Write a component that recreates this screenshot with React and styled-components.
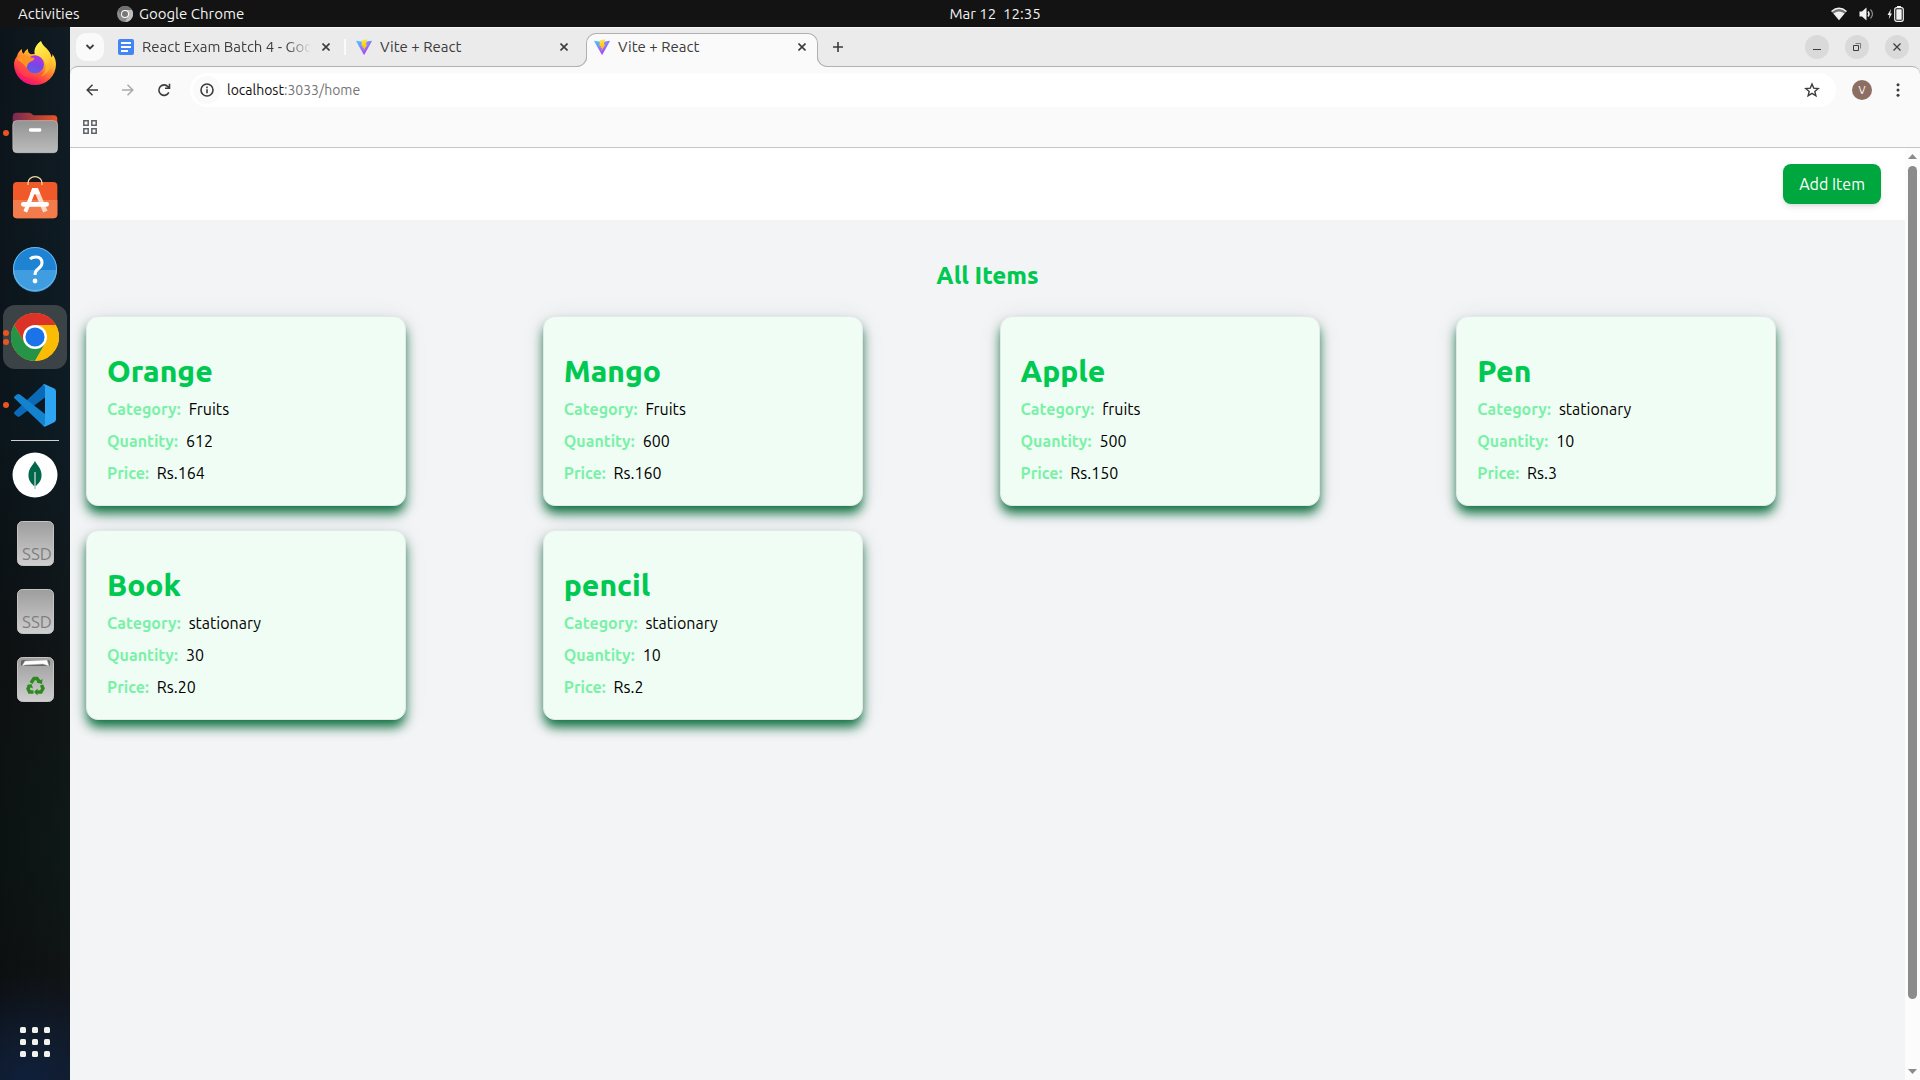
import React from "react";
import styled, { createGlobalStyle, css } from "styled-components";

const Global = createGlobalStyle`
  *, *::before, *::after { box-sizing: border-box; }
  body { margin: 0; font-family: "Ubuntu", "Noto Sans", "Open Sans", sans-serif; }
  h1, h2, dl, dd, dt { margin: 0; }
  button, input { font: inherit; color: inherit; }
  button { border: 0; padding: 0; background: none; cursor: pointer; }
  svg { display: block; }
`;

/* ---------- desktop shell ---------- */

const Desktop = styled.div`
  display: flex;
  flex-direction: column;
  height: 100vh;
  overflow: hidden;
  background: #131313;
`;

const TopBar = styled.header`
  display: grid;
  grid-template-columns: 70px 1fr auto 1fr;
  align-items: center;
  flex: none;
  height: 27px;
  background: #131313;
  color: #f2f2f2;
  font-size: 15px;
  line-height: 20px;
  white-space: pre;
`;

const Activities = styled.button`
  padding-left: 18px;
  text-align: left;
`;

const AppMenu = styled.button`
  display: flex;
  align-items: center;
  justify-self: start;
  gap: 6px;
  padding-left: 47px;
`;

const StatusArea = styled.div`
  display: flex;
  align-items: center;
  justify-content: flex-end;
  gap: 12px;
  padding-right: 16px;
`;

const Workspace = styled.div`
  display: flex;
  flex: 1;
  min-height: 0;
`;

/* ---------- dock ---------- */

const Dock = styled.nav`
  display: flex;
  flex-direction: column;
  align-items: center;
  gap: 4px;
  flex: none;
  width: 70px;
  padding: 6px 3px;
  background:
    radial-gradient(circle at 40% 100%, #10203a 0, transparent 110px),
    linear-gradient(90deg, rgba(0, 0, 0, 0.25), transparent),
    linear-gradient(#101b23 0, #0e1c24 38%, #111516 62%, #0e1917 78%, #111315 92%, #111722 100%);
`;

const DockButton = styled.button`
  position: relative;
  display: flex;
  align-items: center;
  justify-content: center;
  flex: none;
  width: 64px;
  height: 64px;
  border-radius: 12px;
  ${(p) => p.$active && css`background: #3b4347;`}
`;

const RunningDots = styled.span`
  position: absolute;
  left: 0;
  top: 0;
  bottom: 0;
  display: flex;
  flex-direction: column;
  justify-content: center;
  gap: 3px;
`;

const Dot = styled.span`
  width: 6px;
  height: 6px;
  border-radius: 50%;
  background: #e95420;
`;

const DockRule = styled.hr`
  flex: none;
  width: 48px;
  height: 1px;
  margin: -1px 0 -2px;
  border: 0;
  background: #d0d0d0;
`;

const DockSpacer = styled.div`
  flex: 1;
`;

/* ---------- browser chrome ---------- */

const Browser = styled.div`
  display: flex;
  flex-direction: column;
  flex: 1;
  min-width: 0;
  background: #ebebeb;
  border-top: 1px solid #f8f8f8;
`;

const TabStrip = styled.div`
  display: flex;
  align-items: center;
  flex: none;
  height: 38px;
  padding: 0 11px 0 6px;
  color: #3c3c3c;
`;

const TabSearch = styled.button`
  display: grid;
  place-items: center;
  width: 28px;
  height: 28px;
  margin-right: 6px;
  border-radius: 10px;
  background: #fafafa;
`;

const Tab = styled.div`
  position: relative;
  display: flex;
  align-items: center;
  gap: 8px;
  width: 232px;
  height: 28px;
  padding: 0 8px;
  font-size: 15px;
  line-height: 20px;
  ${(p) =>
    p.$active &&
    css`
      z-index: 1;
      align-self: flex-end;
      height: 34px;
      margin-bottom: -1px;
      padding: 0 7px 7px;
      border: 1px solid #b0b0b0;
      border-bottom: 0;
      border-radius: 10px 10px 0 0;
      background: #fafafa;

      &::before,
      &::after {
        content: "";
        position: absolute;
        bottom: 0;
        width: 10px;
        height: 10px;
        border: 0 solid #b0b0b0;
        border-bottom-width: 1px;
        clip-path: inset(0 -1px 0 -1px);
      }
      &::before {
        left: -10px;
        border-right-width: 1px;
        border-bottom-right-radius: 10px;
        box-shadow: 3px 3px 0 2px #fafafa;
      }
      &::after {
        right: -10px;
        border-left-width: 1px;
        border-bottom-left-radius: 10px;
        box-shadow: -3px 3px 0 2px #fafafa;
      }
    `}
`;

const TabTitle = styled.span`
  flex: 1;
  overflow: hidden;
  white-space: nowrap;
  ${(p) =>
    p.$faded &&
    css`
      margin-right: -8px;
      mask-image: linear-gradient(90deg, #000 82%, transparent 96%);
    `}
`;

const TabGap = styled.span`
  display: flex;
  justify-content: center;
  width: 6px;
  height: 16px;
  &::before {
    content: "";
    width: 2px;
    background: ${(p) => (p.$visible ? "#fafafa" : "transparent")};
  }
`;

const SmallButton = styled.button`
  display: grid;
  place-items: center;
  flex: none;
  width: ${(p) => p.$size || 16}px;
  height: ${(p) => p.$size || 16}px;
  border-radius: 50%;
`;

const NewTab = styled(SmallButton)`
  margin-left: 6px;
`;

const WindowControls = styled.div`
  display: flex;
  gap: 16px;
  margin-left: auto;
`;

const WindowButton = styled(SmallButton)`
  background: #dadada;
`;

const Toolbar = styled.div`
  flex: none;
  border: 0 solid #b0b0b0;
  border-top-width: 1px;
  border-radius: 8px 8px 0 0;
  background: #fafafa;
  color: #3c3c3c;
`;

const AddressRow = styled.div`
  display: flex;
  align-items: center;
  gap: 8px;
  padding: 6px 8px 0;
`;

const OmniBox = styled.form`
  display: flex;
  align-items: center;
  flex: 1;
  height: 34px;
  margin: 0 4px;
  padding: 0 10px 0 3px;
  border-radius: 17px;
  background: #fff;
`;

const SiteInfo = styled(SmallButton)`
  background: #fafafa;
  margin-right: 6px;
`;

const Address = styled.a`
  flex: 1;
  color: #757575;
  font-size: 14px;
  line-height: 20px;
  text-decoration: none;
`;

const Host = styled.span`
  color: #111;
`;

const Avatar = styled.button`
  width: 20px;
  height: 20px;
  margin: 0 4px;
  border-radius: 50%;
  background: #8d6e63;
  color: #fff;
  font-size: 11px;
  line-height: 20px;
`;

const BookmarkRow = styled.div`
  display: flex;
  align-items: center;
  height: 41px;
  padding: 0 6px;
  border-bottom: 1px solid #c6c6c6;
  color: #5f6368;
`;

/* ---------- inventory page ---------- */

const Viewport = styled.div`
  display: flex;
  flex: 1;
  min-height: 0;
`;

const Page = styled.div`
  flex: 1;
  min-width: 0;
  overflow: hidden;
  background: #f3f4f6;
  font-size: 16px;
  line-height: 24px;
  color: #000;
`;

const NavBar = styled.header`
  display: flex;
  justify-content: flex-end;
  padding: 16px 24px;
  background: #fff;
`;

const AddItem = styled.button`
  padding: 8px 16px;
  border-radius: 8px;
  background: #00a63e;
  color: #fff;
  box-shadow: 0 4px 6px -1px rgba(0, 0, 0, 0.1), 0 2px 4px -2px rgba(0, 0, 0, 0.1);
`;

const Content = styled.main`
  padding: 40px 16px;
`;

const Heading = styled.h1`
  margin-bottom: 24px;
  color: #00c951;
  font-size: 24px;
  font-weight: 800;
  line-height: 32px;
  text-align: center;
`;

const CardGrid = styled.div`
  display: grid;
  grid-template-columns: repeat(4, 1fr);
  gap: 24px;
`;

const Card = styled.article`
  max-width: 320px;
  padding: 36px 20px 20px;
  border: 1px solid #e5e7eb;
  border-radius: 12px;
  background: #f0fdf4;
  box-shadow: 0 8px 12px -1px #0d7040, 0 2px 24px rgba(0, 0, 0, 0.08);
`;

const CardTitle = styled.h2`
  margin-bottom: 8px;
  color: #00c951;
  font-size: 30px;
  font-weight: 800;
  line-height: 36px;
`;

const Facts = styled.dl`
  display: grid;
  gap: 8px;
`;

const Fact = styled.div`
  display: flex;
  gap: 8px;
`;

const FactName = styled.dt`
  color: #7bf1a8;
  font-weight: 700;
`;

const Rail = styled.div`
  display: flex;
  flex-direction: column;
  align-items: center;
  gap: 7px;
  width: 15px;
  padding: 6px 0;
  background: #fcfcfc;
`;

const Track = styled.div`
  flex: 1;
  width: 9px;
`;

const Thumb = styled.div`
  height: 93%;
  border-radius: 5px;
  background: #8b8b8b;
`;

/* ---------- drawings ---------- */

const Firefox = () => (
  <svg width="42" height="48" viewBox="42 48 126 144">
    <defs>
      <linearGradient id="ffBody" x1="0.8" y1="0.1" x2="0.3" y2="1">
        <stop offset="0" stopColor="#fff04a" />
        <stop offset="0.35" stopColor="#ffb52c" />
        <stop offset="0.65" stopColor="#ff5a38" />
        <stop offset="0.85" stopColor="#ff2358" />
        <stop offset="1" stopColor="#e3128a" />
      </linearGradient>
      <linearGradient id="ffGlobe" x1="0.6" y1="0" x2="0.3" y2="1">
        <stop offset="0" stopColor="#b833e1" />
        <stop offset="0.5" stopColor="#7a45e5" />
        <stop offset="1" stopColor="#5b5ff0" />
      </linearGradient>
      <linearGradient id="ffFlame" x1="0.3" y1="0" x2="0.7" y2="1">
        <stop offset="0" stopColor="#fff54f" />
        <stop offset="0.6" stopColor="#ffcf35" />
        <stop offset="1" stopColor="#ff9a2c" />
      </linearGradient>
    </defs>
    <path fill="url(#ffBody)" d="M51 94C53 84 59 76 66 72C65 79 67 84 71 86C74 79 78 74 84 71C82 79 87 85 93 88L107 86C102 72 111 57 123 49C127 64 143 70 150 85C152 90 153 94 154 97C157 95 158 91 157 87C165 96 168 108 168 118A63 62 0 0 1 42 118C42 108 46 100 51 94Z" />
    <path fill="url(#ffFlame)" d="M104 86C101 71 111 57 123 49C127 64 143 70 150 85C164 112 150 146 122 153C141 142 142 118 130 104C122 96 108 96 104 86Z" />
    <circle cx="105" cy="118" r="27" fill="url(#ffGlobe)" />
    <path fill="#ff9423" d="M53 105C59 89 79 87 90 97L103 99C105 106 92 109 86 114C80 120 82 124 80 128C72 119 66 112 53 105Z" />
    <path fill="#ff4a45" opacity="0.55" d="M52 108C70 112 70 124 80 135C94 153 122 149 132 136C128 160 76 168 58 140C52 130 50 118 52 108Z" />
  </svg>
);

const Files = () => (
  <svg width="46" height="42" viewBox="36 260 138 126">
    <defs>
      <linearGradient id="flBack"><stop offset="0" stopColor="#772953" /><stop offset="1" stopColor="#e95420" /></linearGradient>
      <linearGradient id="flFront" x2="0" y2="1"><stop offset="0" stopColor="#929292" /><stop offset="1" stopColor="#bcbcbc" /></linearGradient>
    </defs>
    <path fill="url(#flBack)" d="M38 274Q38 262 50 262H86Q92 262 96 266L100 270H162Q172 270 172 282V330H38Z" />
    <rect x="38.500" y="286" width="134" height="96" rx="12" fill="url(#flFront)" stroke="#c9c9c9" strokeWidth="2" />
    <rect x="87" y="309" width="37" height="10" rx="4" fill="#fff" />
  </svg>
);

const Software = () => (
  <svg width="46" height="52" viewBox="36 450 138 156">
    <rect x="39" y="471" width="133" height="109" rx="12" fill="#f0592a" />
    <path d="M39 525H172V568Q172 580 160 580H51Q39 580 39 568Z" fill="#f37b4c" />
    <path d="M84 480V474A21 19 0 0 1 126 474V480" fill="none" stroke="#f3d7a6" strokeWidth="4" />
    <path d="M103 491L76 560" stroke="#fff" strokeWidth="12" />
    <path d="M107 491L136 560" stroke="#fbd9cb" strokeWidth="14" />
    <path d="M97 489H113L121 508H90Z" fill="#fff" />
    <rect x="63" y="531" width="84" height="14" rx="7" fill="#fff" />
  </svg>
);

const Help = () => (
  <svg width="46" height="46" viewBox="0 0 46 46">
    <circle cx="23" cy="23" r="22" fill="#1f83d3" />
    <path d="M1 24H45A22 22 0 0 1 1 24Z" fill="#409ddf" />
    <circle cx="23" cy="23" r="21.500" fill="none" stroke="#6db8ea" />
    <path d="M18 13Q20 11 24 11Q30 11 30 17Q30 20 26 23Q23 25 23 29" fill="none" stroke="#fff" strokeWidth="3" />
    <circle cx="23" cy="35" r="2.400" fill="#fff" />
  </svg>
);

const Chrome = () => (
  <svg width="48" height="48" viewBox="0 0 48 48">
    <circle cx="24" cy="24" r="24" fill="#fbbc05" />
    <path fill="#dd3228" d="M3.200 12A24 24 0 0 1 44.800 12H24L13.600 30Z" />
    <path fill="#269447" d="M3.200 12A24 24 0 0 0 24 48L34.400 30L24 24L13.600 30Z" />
    <path fill="#fbbc05" d="M24 12H44.800A24 24 0 0 1 24 48L34.400 30Z" />
    <circle cx="24" cy="24" r="12" fill="#fff" />
    <circle cx="24" cy="24" r="9.600" fill="#1a73e8" />
  </svg>
);

const Code = () => (
  <svg width="42" height="43" viewBox="42 41 126 128">
    <path fill="#0a6ab8" d="M44 124Q40 127 44 131L52 138Q56 140 60 137L136 80V42Q132 40 128 44Z" />
    <path fill="#1483cf" d="M44 84Q40 80 44 77L52 71Q56 69 60 72L136 131V168Q132 168 128 164Z" />
    <path fill="#2ea5f2" d="M136 42L163 54Q168 57 168 62V147Q168 152 163 155L136 168Q131 168 128 164Q135 168 135 160V50Q135 42 128 45Q131 40 136 42Z" />
  </svg>
);

const Mongo = () => (
  <svg width="46" height="46" viewBox="0 0 46 46">
    <circle cx="23" cy="23" r="22.500" fill="#fff" />
    <path fill="#00684a" d="M23 9C25 13 29 16 29.500 22C30 28 27 31 24 34H22C19 31 16 28 16.500 22C17 16 21 13 23 9Z" />
    <path d="M23 20V37" stroke="#b8c4c2" strokeWidth="1.500" />
  </svg>
);

const DriveShell = ({ id }) => (
  <>
    <defs>
      <linearGradient id={id} x2="0" y2="1"><stop offset="0" stopColor="#9d9d9d" /><stop offset="1" stopColor="#cfcfcf" /></linearGradient>
    </defs>
    <rect x="0.500" y="0.500" width="36" height="44" rx="5" fill={`url(#${id})`} stroke="#c4c4c4" />
  </>
);

const Ssd = ({ id }) => (
  <svg width="37" height="45" viewBox="0 0 37 45">
    <DriveShell id={id} />
    <text x="5" y="39" fontSize="17" fill="#7f7f7f">SSD</text>
  </svg>
);

const Trash = () => (
  <svg width="37" height="45" viewBox="0 0 37 45">
    <DriveShell id="trashShell" />
    <path d="M4 9V5Q4 3 6 3H31Q33 3 33 5V9Z" fill="#666" />
    <path d="M5 9L8 4L30 3L32 9L26 7L8 8Z" fill="#fff" stroke="#bbb" strokeWidth="0.500" />
    <g fill="none" stroke="#2c8a1f" strokeWidth="3.400">
      <path d="M14 26L17 21.500H20L22.500 25" />
      <path d="M24.500 28L26 31.500L24 35H19.500" />
      <path d="M16.500 35H12.500L11 31.500L13 28" />
    </g>
    <g fill="#2c8a1f">
      <path d="M19.500 25.500L25 27L25.500 22Z" />
      <path d="M20.500 31.500V38.500L17 35Z" />
      <path d="M9.500 28.500L14.500 27L16 31.500Z" />
    </g>
  </svg>
);

const AppGrid = () => (
  <svg width="30" height="30" viewBox="0 0 30 30" fill="#f1f1ee">
    {[0, 12, 24].map((y) => [0, 12, 24].map((x) => <rect key={`${x}-${y}`} x={x} y={y} width="6" height="6" rx="1.500" />))}
  </svg>
);

const ViteLogo = () => (
  <svg width="16" height="16" viewBox="0 0 32 32">
    <defs>
      <linearGradient id="vtA" x1="0" y1="0" x2="0.6" y2="1"><stop offset="0" stopColor="#41d1ff" /><stop offset="1" stopColor="#bd34fe" /></linearGradient>
      <linearGradient id="vtB" x1="0.4" y1="0" x2="0.6" y2="1"><stop offset="0" stopColor="#ffea4a" /><stop offset="1" stopColor="#ffa800" /></linearGradient>
    </defs>
    <path fill="url(#vtA)" d="M31.500 4.800L16.900 30.900Q16.200 32 15.400 30.900L0.500 4.800Q0 3.300 1.400 3.400L16 6L30.600 3.400Q32 3.400 31.500 4.800Z" />
    <path fill="url(#vtB)" d="M22.500 0.500L11.600 2.600L10.900 14.600L14 14L13 18.600L16 17.800L14.600 24.500L23 11.200L19.700 11.700Z" />
  </svg>
);

const DocsLogo = () => (
  <svg width="16" height="16" viewBox="0 0 16 16">
    <rect width="16" height="16" rx="2" fill="#4285f4" />
    <path d="M3 4H13M3 8H13M3 12H10" stroke="#fff" strokeWidth="2" />
  </svg>
);

const Stroke = ({ size = 16, box = 16, w = 2, children }) => (
  <svg width={size} height={size} viewBox={`0 0 ${box} ${box}`} fill="none" stroke="currentColor" strokeWidth={w}>
    {children}
  </svg>
);

const CloseGlyph = () => <Stroke size={8} box={8} w={1.6}><path d="M0.500 0.500L7.500 7.500M7.500 0.500L0.500 7.500" /></Stroke>;
const ChevronGlyph = () => <Stroke size={10} box={10} w={1.8}><path d="M1.500 3L5 6.500L8.500 3" /></Stroke>;
const PlusGlyph = () => <Stroke size={10} box={10} w={1.6}><path d="M5 0V10M0 5H10" /></Stroke>;
const BackGlyph = () => <Stroke size={12} box={12} w={1.5}><path d="M12 6H1.500M6.500 0.700L1.200 6L6.500 11.300" /></Stroke>;
const ForwardGlyph = () => <Stroke size={12} box={12} w={1.5}><g stroke="#a9a9a9"><path d="M0 6H10.500M5.500 0.700L10.800 6L5.500 11.300" /></g></Stroke>;
const ReloadGlyph = () => <Stroke size={14} box={14} w={1.6}><path d="M11.800 9.300A5.200 5.200 0 1 1 11 3.700L12.500 5M12.500 0.800V5.200H8" /></Stroke>;
const InfoGlyph = () => <Stroke size={14} box={14} w={1.6}><circle cx="7" cy="7" r="6" /><path d="M7 6.300V10.200M7 3.600V5.200" /></Stroke>;
const StarGlyph = () => <Stroke size={16} box={16} w={1.4}><path d="M8 2L9.700 6.100L14.200 6.500L10.800 9.400L11.900 13.800L8 11.400L4.100 13.800L5.200 9.400L1.800 6.500L6.300 6.100Z" /></Stroke>;
const DotsGlyph = () => <svg width="4" height="14" viewBox="0 0 4 14" fill="#3c3c3c"><circle cx="2" cy="1.700" r="1.500" /><circle cx="2" cy="7" r="1.500" /><circle cx="2" cy="12.300" r="1.500" /></svg>;
const AppsGlyph = () => <Stroke size={14} box={14} w={1.5}><path d="M0.800 0.800H5.200V5.200H0.800ZM8.800 0.800H13.200V5.200H8.800ZM0.800 8.800H5.200V13.200H0.800ZM8.800 8.800H13.200V13.200H8.800Z" /></Stroke>;

const ChromeMono = () => (
  <svg width="16" height="16" viewBox="0 0 16 16">
    <circle cx="8" cy="8" r="8" fill="#8c8c8c" />
    <path d="M8 4H15A8 8 0 0 1 8 16L11.500 10Z" fill="#bdbdbd" />
    <path d="M1 4A8 8 0 0 1 15 4H8L4.500 10Z" fill="#707070" />
    <circle cx="8" cy="8" r="4" fill="#fff" />
    <circle cx="8" cy="8" r="3" fill="#777" />
  </svg>
);

const Wifi = () => (
  <svg width="16" height="14" viewBox="0 0 16 14">
    <path d="M0.500 4.500Q8 -2 15.500 4.500L8 13.500Z" fill="#777" />
    <path d="M0.500 4.500Q8 -2 15.500 4.500" fill="none" stroke="#f2f2f2" strokeWidth="1.500" />
    <path d="M2.500 6.500Q8 2.500 13.500 6.500L8 13Z" fill="#f2f2f2" />
  </svg>
);

const Speaker = () => (
  <svg width="16" height="14" viewBox="0 0 16 14">
    <path d="M0.500 4.500H3L7.500 0.500V13.500L3 9.500H0.500Z" fill="#f2f2f2" />
    <path d="M9 4.500Q11 7 9 9.500" fill="none" stroke="#f2f2f2" strokeWidth="1.500" />
    <path d="M11.500 2.500Q15.500 7 11.500 11.500" fill="none" stroke="#888" strokeWidth="1.300" />
  </svg>
);

const Battery = () => (
  <svg width="17" height="16" viewBox="0 0 17 16">
    <path d="M4 3L0.500 9H2.500L1.800 13L5 7.500H3.200Z" fill="#f2f2f2" />
    <rect x="7.700" y="1.700" width="8.600" height="13.600" rx="2" fill="none" stroke="#f2f2f2" strokeWidth="1.200" />
    <rect x="9.300" y="3.300" width="5.400" height="10.400" rx="0.500" fill="#f2f2f2" />
    <path d="M10 0.600H14" stroke="#f2f2f2" strokeWidth="1.200" />
  </svg>
);

const Arrow = ({ down }) => (
  <svg width="9" height="5" viewBox="0 0 9 5"><path d={down ? "M0 0H9L4.500 5Z" : "M0 5H9L4.500 0Z"} fill="#8b8b8b" /></svg>
);

/* ---------- data ---------- */

const tabs = [
  { title: "React Exam Batch 4 - Goo", icon: DocsLogo, faded: true },
  { title: "Vite + React", icon: ViteLogo },
  { title: "Vite + React", icon: ViteLogo, active: true },
];

const items = [
  { name: "Orange", category: "Fruits", quantity: 612, price: 164 },
  { name: "Mango", category: "Fruits", quantity: 600, price: 160 },
  { name: "Apple", category: "fruits", quantity: 500, price: 150 },
  { name: "Pen", category: "stationary", quantity: 10, price: 3 },
  { name: "Book", category: "stationary", quantity: 30, price: 20 },
  { name: "pencil", category: "stationary", quantity: 10, price: 2 },
];

const DockApp = ({ label, active, windows = 0, children }) => (
  <DockButton aria-label={label} $active={active}>
    {windows > 0 && (
      <RunningDots>
        {Array.from({ length: windows }, (_, i) => <Dot key={i} />)}
      </RunningDots>
    )}
    {children}
  </DockButton>
);

const ItemCard = ({ item }) => (
  <Card>
    <CardTitle>{item.name}</CardTitle>
    <Facts>
      <Fact><FactName>Category:</FactName><dd>{item.category}</dd></Fact>
      <Fact><FactName>Quantity:</FactName><dd>{item.quantity}</dd></Fact>
      <Fact><FactName>Price:</FactName><dd>{`Rs.${item.price}`}</dd></Fact>
    </Facts>
  </Card>
);

export default function App() {
  return (
    <Desktop>
      <Global />
      <TopBar>
        <Activities>Activities</Activities>
        <AppMenu><ChromeMono />Google Chrome</AppMenu>
        <time>{"Mar 12  12:35"}</time>
        <StatusArea><Wifi /><Speaker /><Battery /></StatusArea>
      </TopBar>
      <Workspace>
        <Dock>
          <DockApp label="Firefox"><Firefox /></DockApp>
          <DockApp label="Files" windows={1}><Files /></DockApp>
          <DockApp label="Software"><Software /></DockApp>
          <DockApp label="Help"><Help /></DockApp>
          <DockApp label="Chrome" active windows={2}><Chrome /></DockApp>
          <DockApp label="Code" windows={1}><Code /></DockApp>
          <DockRule />
          <DockApp label="Compass"><Mongo /></DockApp>
          <DockApp label="Drive 1"><Ssd id="ssdOne" /></DockApp>
          <DockApp label="Drive 2"><Ssd id="ssdTwo" /></DockApp>
          <DockApp label="Trash"><Trash /></DockApp>
          <DockSpacer />
          <DockApp label="Applications"><AppGrid /></DockApp>
        </Dock>
        <Browser>
          <TabStrip>
            <TabSearch aria-label="Search tabs"><ChevronGlyph /></TabSearch>
            {tabs.map(({ title, icon: Icon, active, faded }, i) => (
              <React.Fragment key={i}>
                {i > 0 && <TabGap $visible={!active} />}
                <Tab $active={active}>
                  <Icon />
                  <TabTitle $faded={faded}>{title}</TabTitle>
                  <SmallButton aria-label="Close tab"><CloseGlyph /></SmallButton>
                </Tab>
              </React.Fragment>
            ))}
            <NewTab aria-label="New tab" $size={28}><PlusGlyph /></NewTab>
            <WindowControls>
              <WindowButton aria-label="Minimise" $size={24}>
                <Stroke size={8} box={8} w={1}><path d="M0 6.500H8" /></Stroke>
              </WindowButton>
              <WindowButton aria-label="Restore" $size={24}>
                <Stroke size={8} box={8} w={1}><path d="M0.500 2.500H5.500V7.500H0.500Z" /><path d="M2.500 0.500H7.500V5.500" opacity="0.6" /></Stroke>
              </WindowButton>
              <WindowButton aria-label="Close" $size={24}>
                <Stroke size={8} box={8} w={1.2}><path d="M0.500 0.500L7.500 7.500M7.500 0.500L0.500 7.500" /></Stroke>
              </WindowButton>
            </WindowControls>
          </TabStrip>
          <Toolbar>
            <AddressRow>
              <SmallButton aria-label="Back" $size={28}><BackGlyph /></SmallButton>
              <SmallButton aria-label="Forward" $size={28}><ForwardGlyph /></SmallButton>
              <SmallButton aria-label="Reload" $size={28}><ReloadGlyph /></SmallButton>
              <OmniBox>
                <SiteInfo type="button" aria-label="Site information" $size={28}><InfoGlyph /></SiteInfo>
                <Address href="#home"><Host>localhost</Host>:3033/home</Address>
                <SmallButton type="button" aria-label="Bookmark this page" $size={28}><StarGlyph /></SmallButton>
              </OmniBox>
              <Avatar>V</Avatar>
              <SmallButton aria-label="Menu" $size={28}><DotsGlyph /></SmallButton>
            </AddressRow>
            <BookmarkRow>
              <SmallButton aria-label="Apps" $size={28}><AppsGlyph /></SmallButton>
            </BookmarkRow>
          </Toolbar>
          <Viewport>
            <Page>
              <NavBar><AddItem>Add Item</AddItem></NavBar>
              <Content>
                <Heading>All Items</Heading>
                <CardGrid>
                  {items.map((item) => <ItemCard key={item.name} item={item} />)}
                </CardGrid>
              </Content>
            </Page>
            <Rail>
              <Arrow />
              <Track><Thumb /></Track>
              <Arrow down />
            </Rail>
          </Viewport>
        </Browser>
      </Workspace>
    </Desktop>
  );
}
